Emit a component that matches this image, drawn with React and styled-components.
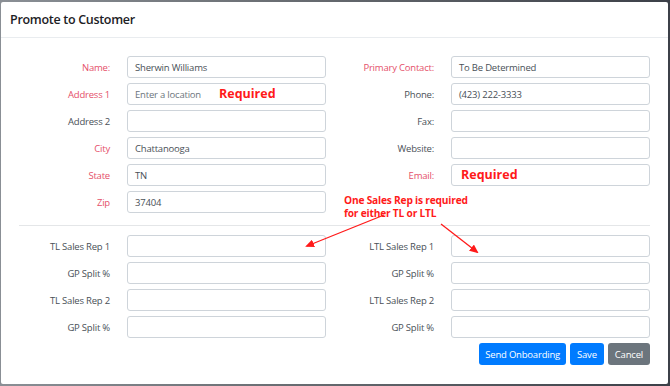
import React from "react";
import styled, { createGlobalStyle } from "styled-components";

const Global = createGlobalStyle`
  html, body { margin: 0; padding: 0; }
  body {
    background: #4a4f57;
    font-family: "Open Sans", "Liberation Sans", sans-serif;
    width: 670px;
    height: 386px;
    overflow: hidden;
  }
`;

const Backdrop = styled.div`
  width: 670px;
  height: 386px;
  padding: 2px 2px 2px 1px;
  box-sizing: border-box;
  background: linear-gradient(90deg, #8a8f95 0%, #6b6f74 40%, #3c4048 100%);
`;

const Modal = styled.div`
  background: #fff;
  height: 100%;
  box-sizing: border-box;
  display: flex;
  flex-direction: column;
  border-radius: 2px;
`;

const Header = styled.div`
  height: 35px;
  border-bottom: 1px solid #e9ecef;
  display: flex;
  align-items: center;
  padding-left: 9px;
  font-size: 12.5px;
  font-weight: 600;
  letter-spacing: -0.3px;
  color: #1d2125;
`;

const Body = styled.div`
  position: relative;
  padding: 18px 18px 0 18px;
  display: flex;
  flex-direction: column;
`;

const Columns = styled.div`
  display: grid;
  grid-template-columns: 307px 307px;
  column-gap: 17px;
`;

const Column = styled.div`
  display: flex;
  flex-direction: column;
  gap: 5px;
`;

const Row = styled.div`
  display: grid;
  grid-template-columns: 91px 199px;
  column-gap: 17px;
  align-items: center;
  height: 22px;
`;

const Label = styled.div`
  text-align: right;
  font-size: 9.5px;
  letter-spacing: -0.2px;
  color: ${(p) => (p.$required ? "#e5506a" : "#495057")};
  white-space: nowrap;
`;

const Field = styled.div`
  position: relative;
  box-sizing: border-box;
  height: 22px;
  border: 1px solid #ced4da;
  border-radius: 3px;
  display: flex;
  align-items: center;
  padding-left: 7px;
  font-size: 9.5px;
  letter-spacing: -0.2px;
  color: ${(p) => (p.$placeholder ? "#6c757d" : "#495057")};
  background: #fff;
`;

const RequiredTag = styled.span`
  position: absolute;
  left: ${(p) => p.$left}px;
  top: 50%;
  transform: translateY(-55%);
  color: #ff1a1a;
  font-weight: 700;
  font-size: 12.5px;
  letter-spacing: 0;
`;

const Divider = styled.hr`
  border: 0;
  border-top: 1px solid #e4e6e8;
  margin: 12px 0 9px 0;
  height: 0;
`;

const Footer = styled.div`
  display: flex;
  justify-content: flex-end;
  gap: 4px;
  padding: 5px 18px 0 0;
`;

const Button = styled.button`
  height: 22px;
  border: none;
  border-radius: 3px;
  padding: 0 ${(p) => p.$pad}px;
  font-family: "Open Sans", "Liberation Sans", sans-serif;
  font-size: 9.5px;
  letter-spacing: -0.2px;
  color: #fff;
  background: ${(p) => (p.$variant === "secondary" ? "#6c757d" : "#007bff")};
`;

const Note = styled.div`
  position: absolute;
  left: 343px;
  top: 156px;
  color: #ff1a1a;
  font-weight: 700;
  font-size: 10.2px;
  letter-spacing: -0.2px;
  line-height: 13px;
  white-space: nowrap;
`;

const Arrows = styled.svg`
  position: absolute;
  left: 0;
  top: 0;
  pointer-events: none;
`;

const leftRows = [
  { label: "Name:", req: true, value: "Sherwin Williams" },
  { label: "Address 1", req: true, value: "Enter a location", placeholder: true, tag: 91 },
  { label: "Address 2", value: "" },
  { label: "City", req: true, value: "Chattanooga" },
  { label: "State", req: true, value: "TN" },
  { label: "Zip", req: true, value: "37404" },
];

const rightRows = [
  { label: "Primary Contact:", req: true, value: "To Be Determined" },
  { label: "Phone:", value: "(423) 222-3333" },
  { label: "Fax:", value: "" },
  { label: "Website:", value: "" },
  { label: "Email:", req: true, value: "", tag: 9 },
  null,
];

const repLeft = ["TL Sales Rep 1", "GP Split %", "TL Sales Rep 2", "GP Split %"];
const repRight = ["LTL Sales Rep 1", "GP Split %", "LTL Sales Rep 2", "GP Split %"];

function FormRow({ r }) {
  if (!r) return <Row />;
  return (
    <Row>
      <Label $required={r.req}>{r.label}</Label>
      <Field $placeholder={r.placeholder}>
        {r.value}
        {r.tag !== undefined && <RequiredTag $left={r.tag}>Required</RequiredTag>}
      </Field>
    </Row>
  );
}

export default function App() {
  return (
    <>
      <Global />
      <Backdrop>
        <Modal>
          <Header>Promote to Customer</Header>
          <Body>
            <Columns>
              <Column>
                {leftRows.map((r, i) => (
                  <FormRow key={i} r={r} />
                ))}
              </Column>
              <Column>
                {rightRows.map((r, i) => (
                  <FormRow key={i} r={r} />
                ))}
              </Column>
            </Columns>
            <Divider />
            <Columns>
              <Column>
                {repLeft.map((l, i) => (
                  <FormRow key={i} r={{ label: l, value: "" }} />
                ))}
              </Column>
              <Column>
                {repRight.map((l, i) => (
                  <FormRow key={i} r={{ label: l, value: "" }} />
                ))}
              </Column>
            </Columns>
            <Note>
              One Sales Rep is required
              <br />
              for either TL or LTL
            </Note>
            <Arrows width="670" height="300" viewBox="0 0 670 300">
              <defs>
                <marker id="ah" markerWidth="9" markerHeight="8" refX="7" refY="4" orient="auto" markerUnits="userSpaceOnUse">
                  <path d="M0,0 L9,4 L0,8 Z" fill="#ff1a1a" />
                </marker>
              </defs>
              <line x1="383" y1="177" x2="306" y2="208" stroke="#ff1a1a" strokeWidth="1.3" markerEnd="url(#ah)" />
              <line x1="440" y1="186" x2="476" y2="214" stroke="#ff1a1a" strokeWidth="1.3" markerEnd="url(#ah)" />
            </Arrows>
          </Body>
          <Footer>
            <Button $pad={6}>Send Onboarding</Button>
            <Button $pad={7}>Save</Button>
            <Button $pad={7} $variant="secondary">Cancel</Button>
          </Footer>
        </Modal>
      </Backdrop>
    </>
  );
}
